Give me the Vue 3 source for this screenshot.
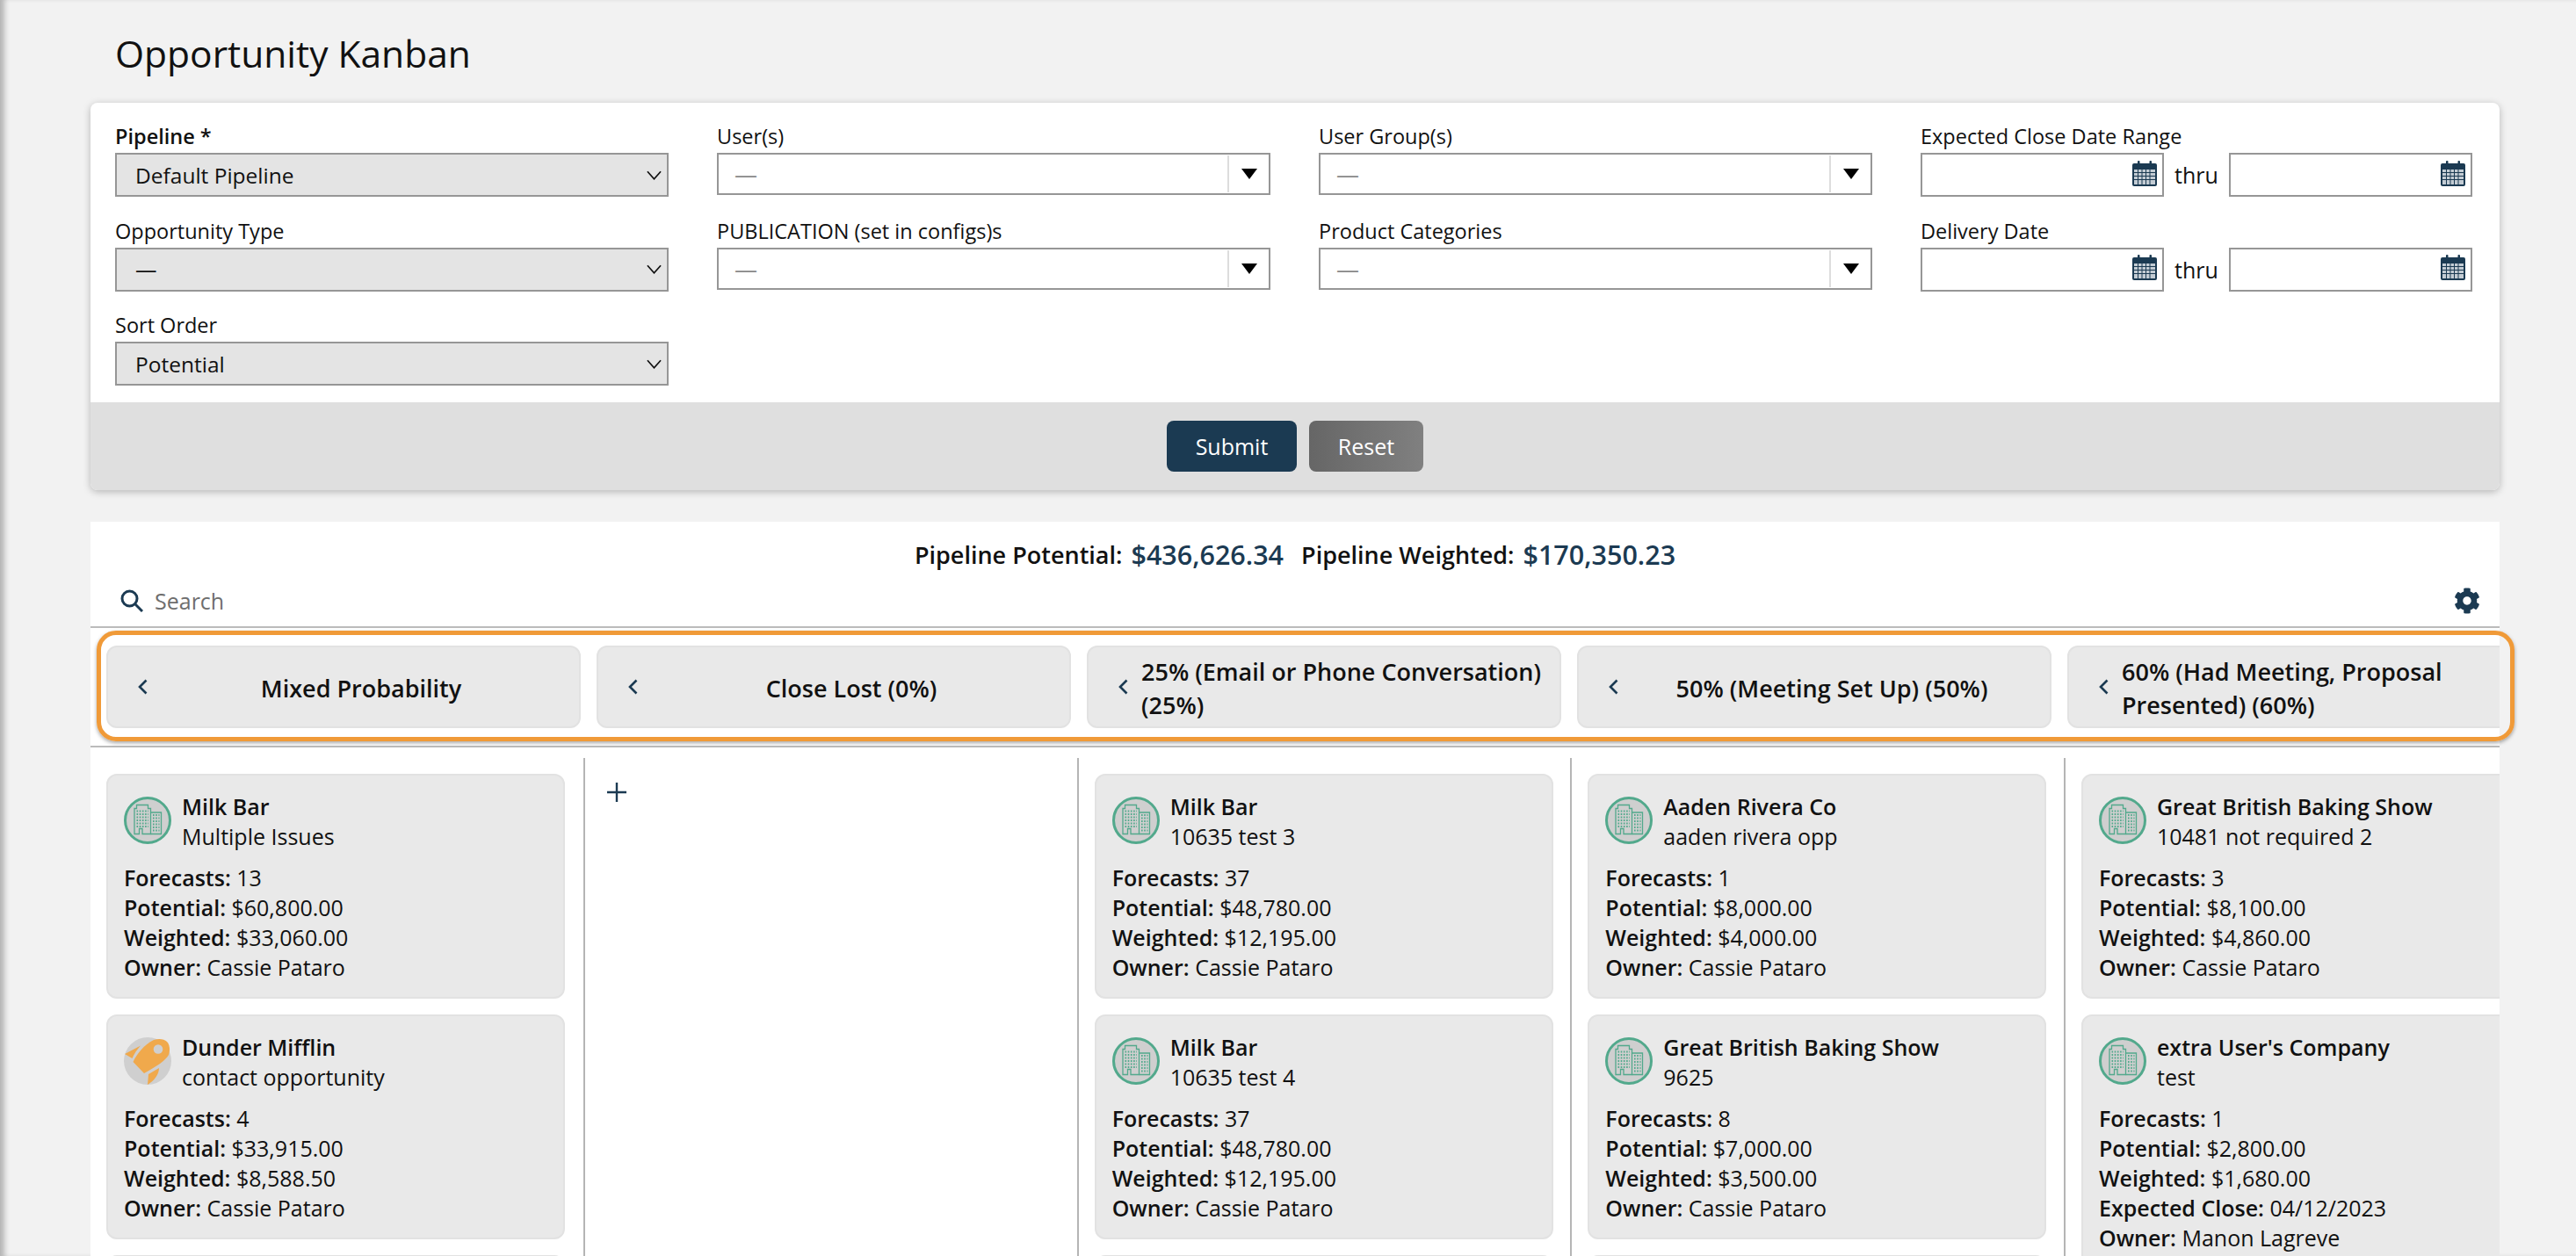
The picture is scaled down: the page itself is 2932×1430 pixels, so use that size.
<template>
  <div class="page">
    <h1 class="page-title">Opportunity Kanban</h1>

    <section class="filters">
      <div class="filter-grid">
        <div v-for="f in filters" :key="f.label" class="field">
          <label class="field-label" :class="{ required: f.required }">{{ f.label }}</label>

          <div v-if="f.kind === 'select'" class="select-box">
            <span>{{ f.value }}</span>
            <svg class="select-chevron" viewBox="0 0 18 11"><path d="M1 1l8 9 8-9" /></svg>
          </div>

          <div v-else-if="f.kind === 'multi'" class="multi-box">
            <span class="multi-value">—</span>
            <div class="multi-caret"><i></i></div>
          </div>

          <div v-else class="date-range">
            <div class="date-box">
              <svg class="cal" viewBox="0 0 28 29">
                <use href="#cal-icon" />
              </svg>
            </div>
            <span class="thru">thru</span>
            <div class="date-box">
              <svg class="cal" viewBox="0 0 28 29">
                <use href="#cal-icon" />
              </svg>
            </div>
          </div>
        </div>
      </div>
      <div class="filter-actions">
        <button class="btn btn-submit">Submit</button>
        <button class="btn btn-reset">Reset</button>
      </div>
    </section>

    <section class="board">
      <div class="totals">
        <span class="total-label">Pipeline Potential:</span>
        <span class="total-value">$436,626.34</span>
        <span class="total-label second">Pipeline Weighted:</span>
        <span class="total-value">$170,350.23</span>
      </div>

      <div class="search-row">
        <svg class="search-icon" viewBox="0 0 26 26">
          <circle cx="10.5" cy="10.5" r="8.5" />
          <path d="M16.8 16.8L25 25" />
        </svg>
        <span class="search-text">Search</span>
        <svg class="gear" viewBox="0 0 512 512">
          <path d="M487.4 315.7l-42.6-24.6c4.3-23.2 4.3-47 0-70.2l42.6-24.6c4.9-2.8 7.1-8.6 5.5-14-11.1-35.6-30-67.8-54.7-94.6-3.8-4.1-10-5.1-14.8-2.3L380.8 110c-17.9-15.4-38.5-27.3-60.8-35.1V25.8c0-5.6-3.9-10.5-9.4-11.7-36.7-8.2-74.3-7.8-109.2 0-5.5 1.2-9.4 6.1-9.4 11.7V75c-22.2 7.9-42.8 19.8-60.8 35.1L88.7 85.5c-4.9-2.8-11-1.9-14.8 2.3-24.7 26.7-43.6 58.9-54.7 94.6-1.7 5.4.6 11.2 5.5 14L67.3 221c-4.3 23.2-4.3 47 0 70.2l-42.6 24.6c-4.9 2.8-7.1 8.6-5.5 14 11.1 35.6 30 67.8 54.7 94.6 3.8 4.1 10 5.1 14.8 2.3l42.6-24.6c17.9 15.4 38.5 27.3 60.8 35.1v49.2c0 5.6 3.9 10.5 9.4 11.7 36.7 8.2 74.3 7.8 109.2 0 5.5-1.2 9.4-6.1 9.4-11.7v-49.2c22.2-7.9 42.8-19.8 60.8-35.1l42.6 24.6c4.9 2.8 11 1.9 14.8-2.3 24.7-26.7 43.6-58.9 54.7-94.6 1.5-5.5-.7-11.3-5.6-14.1zM256 336c-44.1 0-80-35.9-80-80s35.9-80 80-80 80 35.9 80 80-35.9 80-80 80z" />
        </svg>
      </div>

      <div class="stage-tabs">
        <div v-for="t in stages" :key="t" class="stage-tab">
          <svg class="tab-chevron" viewBox="0 0 12 18"><path d="M10.5 1.5L3 9l7.5 7.5" /></svg>
          <div class="tab-title"><span>{{ t }}</span></div>
        </div>
      </div>

      <div class="columns">
        <div v-for="(col, i) in columns" :key="i" class="column">
          <svg v-if="col.add" class="add-icon" viewBox="0 0 22 22"><path d="M11 0v22M0 11h22" /></svg>
          <div v-for="(c, j) in col.cards" :key="j" class="card">
            <div v-if="c.name" class="card-head">
              <svg v-if="c.icon === 'rocket'" class="avatar" viewBox="0 0 54 54">
                <circle cx="27" cy="27" r="27" fill="#cfcfcf" />
                <path fill="#f0a94c" d="M10.5 28C14 20 23 8 34 3c6-2 12-1 15 2 3 3 4 9 2 15-3 6-15 14-28 21z" />
                <circle cx="39" cy="13.5" r="5.3" fill="#cfcfcf" />
                <path fill="#f0a94c" d="M1 19l18-9.500C15 14 11.500 19 9.500 24zM28 42l12-7c0 7-5 14-13 19z" />
              </svg>
              <svg v-else class="avatar" viewBox="0 0 54 54">
                <circle cx="27" cy="27" r="25.500" fill="#cfcfcf" stroke="#52a98c" stroke-width="3" />
                <g fill="none" stroke="#52a98c">
                  <path stroke-width="1.300" d="M12 42.500V13.500h2.500V9.500h13v4h3v29H21v-6h-3.500v6z" />
                  <path stroke-width="1.300" d="M30.500 18h12v24.500h-12" />
                  <path stroke-width="1.800" stroke-dasharray="1.600 1.600" d="M14.500 16.500h13.500M14.500 20h13.500M14.500 23.500h13.500M14.500 27h13.500M14.500 30.500h13.500M14.500 34h13.500M33 21h7.500M33 24.500h7.500M33 28h7.500M33 31.500h7.500M33 35h7.500M33 38.500h7.500" />
                </g>
              </svg>
              <div class="card-titles">
                <div class="card-name">{{ c.name }}</div>
                <div class="card-sub">{{ c.sub }}</div>
              </div>
            </div>
            <div v-if="c.name" class="card-lines">
              <div v-for="l in c.lines" :key="l[0]"><b>{{ l[0] }}:</b> {{ l[1] }}</div>
            </div>
          </div>
        </div>
      </div>
    </section>

    <div class="tabs-highlight"></div>

    <svg class="defs" width="0" height="0">
      <defs>
        <g id="cal-icon">
          <rect x="0" y="3" width="28" height="26" rx="2" fill="#1b3a52" />
          <rect x="6" y="0" width="2.500" height="6" rx="1" fill="#1b3a52" />
          <rect x="19.500" y="0" width="2.500" height="6" rx="1" fill="#1b3a52" />
          <rect x="2" y="10" width="24" height="17" fill="#c3ccd4" />
          <path stroke="#1b3a52" stroke-width="1" d="M6.500 10v17M11 10v17M15.500 10v17M20 10v17M2 13.500h24M2 17.500h24M2 21.500h24" />
        </g>
      </defs>
    </svg>
  </div>
</template>

<script setup>
const filters = [
  { label: 'Pipeline *', kind: 'select', value: 'Default Pipeline', required: true },
  { label: 'User(s)', kind: 'multi' },
  { label: 'User Group(s)', kind: 'multi' },
  { label: 'Expected Close Date Range', kind: 'date' },
  { label: 'Opportunity Type', kind: 'select', value: '—' },
  { label: 'PUBLICATION (set in configs)s', kind: 'multi' },
  { label: 'Product Categories', kind: 'multi' },
  { label: 'Delivery Date', kind: 'date' },
  { label: 'Sort Order', kind: 'select', value: 'Potential' }
];

const stages = [
  'Mixed Probability',
  'Close Lost (0%)',
  '25% (Email or Phone Conversation) (25%)',
  '50% (Meeting Set Up) (50%)',
  '60% (Had Meeting, Proposal Presented) (60%)'
];

const card = (name, sub, forecasts, potential, weighted, icon = 'building') => ({
  name,
  sub,
  icon,
  lines: [
    ['Forecasts', forecasts],
    ['Potential', potential],
    ['Weighted', weighted],
    ['Owner', 'Cassie Pataro']
  ]
});

const columns = [
  {
    cards: [
      card('Milk Bar', 'Multiple Issues', '13', '$60,800.00', '$33,060.00'),
      card('Dunder Mifflin', 'contact opportunity', '4', '$33,915.00', '$8,588.50', 'rocket'),
      {}
    ]
  },
  { add: true, cards: [] },
  {
    cards: [
      card('Milk Bar', '10635 test 3', '37', '$48,780.00', '$12,195.00'),
      card('Milk Bar', '10635 test 4', '37', '$48,780.00', '$12,195.00'),
      {}
    ]
  },
  {
    cards: [
      card('Aaden Rivera Co', 'aaden rivera opp', '1', '$8,000.00', '$4,000.00'),
      card('Great British Baking Show', '9625', '8', '$7,000.00', '$3,500.00'),
      {}
    ]
  },
  {
    cards: [
      card('Great British Baking Show', '10481 not required 2', '3', '$8,100.00', '$4,860.00'),
      {
        name: "extra User's Company",
        sub: 'test',
        icon: 'building',
        lines: [
          ['Forecasts', '1'],
          ['Potential', '$2,800.00'],
          ['Weighted', '$1,680.00'],
          ['Expected Close', '04/12/2023'],
          ['Owner', 'Manon Lagreve']
        ]
      }
    ]
  }
];
</script>

<style scoped>
.page {
  position: relative;
  box-sizing: border-box;
  height: 1430px;
  overflow: hidden;
  padding: 0 87px 0 103px;
  background: #f2f2f2;
  box-shadow: inset 8px 0 6px -3px #b4b4b4;
  font-family: "Open Sans", "Noto Sans", sans-serif;
  font-size: 25px;
  color: #111;
}

.page-title {
  height: 117px;
  margin: 0;
  padding: 36px 0 0 28px;
  box-sizing: border-box;
  font-size: 42.5px;
  font-weight: 400;
  line-height: 50px;
}

.filters {
  border-radius: 8px;
  background: #fff;
  box-shadow: 0 2px 8px rgba(0, 0, 0, 0.25);
  overflow: hidden;
}

.filter-grid {
  display: grid;
  grid-template-columns: repeat(4, 630px);
  column-gap: 55px;
  row-gap: 21.5px;
  height: 341px;
  box-sizing: border-box;
  padding: 21px 0 0 28px;
  align-content: start;
  font-size: 23.5px;
}

.field-label {
  display: block;
  height: 36px;
  line-height: 34px;
}

.required {
  font-weight: 600;
}

.select-box {
  display: flex;
  align-items: center;
  justify-content: space-between;
  box-sizing: border-box;
  height: 50px;
  padding: 0 6px 0 21px;
  background: #e4e4e4;
  border: 2px solid #969696;
  font-size: 24.5px;
}

.select-chevron {
  width: 17px;
  height: 11px;
  fill: none;
  stroke: #111;
  stroke-width: 1.8;
}

.multi-box {
  display: flex;
  align-items: center;
  box-sizing: border-box;
  height: 48px;
  background: #fff;
  border: 2px solid #969696;
}

.multi-value {
  flex: 1;
  padding-left: 18px;
  font-size: 26px;
  color: #888;
}

.multi-caret {
  display: flex;
  align-items: center;
  justify-content: center;
  width: 45px;
  height: 42px;
  border-left: 2px solid #ddd;
}

.multi-caret i {
  width: 0;
  height: 0;
  border-left: 9px solid transparent;
  border-right: 9px solid transparent;
  border-top: 12px solid #000;
}

.date-range {
  display: flex;
  align-items: center;
}

.date-box {
  display: flex;
  align-items: center;
  justify-content: flex-end;
  box-sizing: border-box;
  width: 277px;
  height: 50px;
  padding-right: 6px;
  background: #fff;
  border: 2px solid #969696;
}

.cal {
  width: 28px;
  height: 29px;
  margin-top: -4px;
}

.thru {
  width: 74px;
  font-size: 25px;
  text-align: center;
}

.filter-actions {
  display: flex;
  align-items: center;
  justify-content: center;
  gap: 14px;
  height: 100px;
  background: #dfdfdf;
}

.btn {
  height: 58px;
  border: none;
  border-radius: 8px;
  font-family: inherit;
  font-size: 25px;
  color: #fff;
}

.btn-submit {
  width: 148px;
  background: #1b3a52;
}

.btn-reset {
  width: 130px;
  background: linear-gradient(90deg, #666, #808080);
}

.board {
  margin-top: 36px;
  background: #fff;
}

.totals {
  display: flex;
  align-items: center;
  justify-content: center;
  height: 74px;
  font-size: 27px;
}

.total-label {
  font-weight: 600;
}

.total-label.second {
  margin-left: 20px;
}

.total-value {
  margin-left: 10px;
  font-size: 30.5px;
  font-weight: 600;
  color: #1b3a52;
}

.search-row {
  display: flex;
  align-items: center;
  box-sizing: border-box;
  height: 47px;
  padding: 0 22px 14px 34px;
  border-bottom: 2px solid #bbb;
}

.search-icon {
  width: 26px;
  height: 26px;
  fill: none;
  stroke: #1b3a52;
  stroke-width: 3;
}

.search-text {
  margin-left: 13px;
  color: #6e6e6e;
}

.gear {
  width: 30px;
  height: 30px;
  margin-left: auto;
  fill: #1b3a52;
}

.stage-tabs {
  display: flex;
  gap: 18px;
  box-sizing: border-box;
  height: 136px;
  padding: 20px 0 0 18px;
  overflow: hidden;
  border-bottom: 2px solid #bbb;
}

.stage-tab {
  display: flex;
  align-items: center;
  flex: 0 0 540px;
  box-sizing: border-box;
  height: 94px;
  padding: 0 20px 0 33px;
  background: #e9e9e9;
  border: 2px solid #e2e2e2;
  border-radius: 12px;
}

.tab-chevron {
  flex: none;
  width: 12px;
  height: 18px;
  margin-right: 15px;
  fill: none;
  stroke: #1b3a52;
  stroke-width: 2.6;
}

.tab-title {
  flex: 1;
  display: flex;
  justify-content: center;
  padding-top: 3px;
  font-size: 27px;
  font-weight: 600;
  line-height: 38px;
}

.columns {
  display: flex;
  height: 567px;
  margin-top: 12px;
  overflow: hidden;
}

.column {
  flex: 0 0 561.67px;
  box-sizing: border-box;
  height: 100%;
  padding: 18px 19.5px 0 18px;
  border-right: 2px solid #b5b5b5;
}

.column:first-child {
  flex-basis: 563px;
  padding-right: 21px;
}

.column:last-child {
  border-right: none;
}

.add-icon {
  display: block;
  width: 22px;
  height: 22px;
  margin: 10px 0 0 7px;
  fill: none;
  stroke: #1b3a52;
  stroke-width: 2.4;
}

.card {
  box-sizing: border-box;
  min-height: 254px;
  margin-bottom: 18px;
  padding: 18px 18px 17px;
  background: #e9e9e9;
  border: 2px solid #e2e2e2;
  border-radius: 12px;
}

.column:last-child .card {
  width: 522px;
}

.card-head {
  display: flex;
  gap: 12px;
}

.avatar {
  flex: none;
  width: 54px;
  height: 54px;
  margin-top: 6px;
}

.card-titles {
  line-height: 34px;
}

.card-name {
  font-weight: 600;
}

.card-lines {
  margin-top: 13px;
  line-height: 34px;
}

.card-lines b {
  font-weight: 600;
}

.tabs-highlight {
  position: absolute;
  left: 110px;
  top: 718px;
  width: 2752px;
  height: 126px;
  box-sizing: border-box;
  border: 5px solid #f09a38;
  border-radius: 22px;
  box-shadow: 0 2px 4px rgba(0, 0, 0, 0.35);
}

.defs {
  position: absolute;
}
</style>

<style>
html,
body {
  margin: 0;
  height: 1430px;
  overflow: hidden;
}
</style>
